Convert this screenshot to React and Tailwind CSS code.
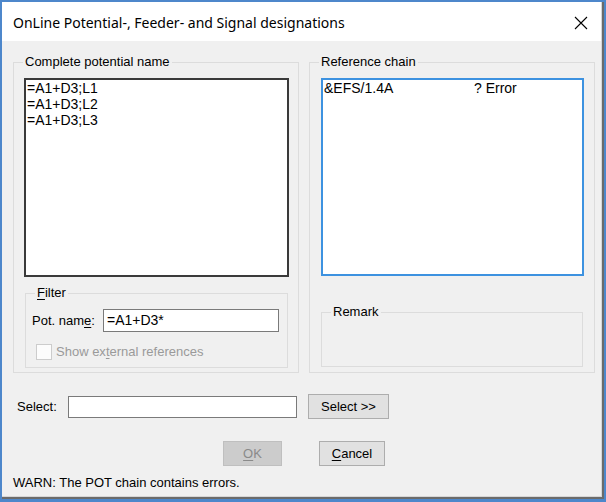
import React from "react";

const sans = { fontFamily: '"Liberation Sans", Arial, sans-serif' };

function Group({ label, className, children }) {
  return (
    <div className={"relative border border-[#dcdcdc] " + className}>
      <span className="absolute left-[9px] top-[-9px] bg-[#f0f0f0] px-[2px] text-[13px] leading-[16px] text-black">
        {label}
      </span>
      {children}
    </div>
  );
}

function Btn({ children, disabled, className }) {
  return (
    <div
      className={
        "flex h-[25px] items-center justify-center border text-[13px] leading-[16px] " +
        (disabled
          ? "border-[#bfbfbf] bg-[#cccccc] text-[#8a8a8a] "
          : "border-[#adadad] bg-[#e1e1e1] text-black ") +
        className
      }
    >
      {children}
    </div>
  );
}

export default function App() {
  return (
    <div
      className="flex h-[502px] w-[606px] flex-col bg-[#4d87cb] pb-[3px] pl-[2px] pr-[2px] pt-[2px]"
      style={sans}
    >
      <div className="flex flex-1 flex-col border-b-2 border-r-2 border-[#6b6b6b]">
        <div className="flex flex-1 flex-col border-b border-r border-[#d6d6d6] bg-[#f0f0f0]">
          {/* Title bar */}
          <div className="flex h-[39px] items-center justify-between bg-white pl-[11px] pr-[13px]">
            <span
              className="mt-[1px] text-[14px] text-black"
              style={{ fontFamily: '"Noto Sans", "Open Sans", sans-serif' }}
            >
              OnLine Potential-, Feeder- and Signal designations
            </span>
            <svg width="14" height="14" viewBox="0 0 14 14" className="mt-[2px]">
              <path d="M1 1 L13 13 M13 1 L1 13" stroke="#000" strokeWidth="1.1" fill="none" />
            </svg>
          </div>

          {/* Content */}
          <div className="flex flex-col pl-[11px] pt-[21px]">
            <div className="flex gap-[10px]">
              <Group label="Complete potential name" className="h-[311px] w-[286px] pl-[10px] pt-[15px]">
                <div className="h-[199px] w-[265px] border-2 border-[#3a3a3a] bg-white pl-[1px] pt-[0px] text-[14px] leading-[16px] text-black">
                  <div>=A1+D3;L1</div>
                  <div>=A1+D3;L2</div>
                  <div>=A1+D3;L3</div>
                </div>
                <Group
                  label={
                    <>
                      <u className="underline-offset-2">F</u>ilter
                    </>
                  }
                  className="ml-[1px] mt-[16px] h-[75px] w-[263px]"
                >
                  <div className="flex items-center pl-[6px] pt-[15px]">
                    <span className="w-[71px] text-[13px] leading-[16px] text-black">
                      Pot. nam<u className="underline-offset-2">e</u>:
                    </span>
                    <div className="flex h-[23px] w-[176px] items-center border border-[#7a7a7a] bg-white pl-[3px] text-[14px] text-black">
                      =A1+D3*
                    </div>
                  </div>
                  <div className="mt-[12px] flex items-center pl-[10px]">
                    <div className="h-[16px] w-[16px] border border-[#cccccc] bg-[#fcfcfc]" />
                    <span className="ml-[4px] text-[13px] leading-[16px] text-[#9a9a9a]">
                      Show ex<u className="underline-offset-2">t</u>ernal references
                    </span>
                  </div>
                </Group>
              </Group>

              <Group label="Reference chain" className="h-[311px] w-[286px] pl-[11px] pt-[15px]">
                <div className="h-[198px] w-[263px] border-2 border-[#3d92e0] bg-white pl-[1px] pt-[0px] text-[14px] leading-[16px] text-black">
                  <div className="flex">
                    <span className="w-[150px]">&amp;EFS/1.4A</span>
                    <span>? Error</span>
                  </div>
                </div>
                <Group label="Remark" className="mt-[36px] h-[55px] w-[262px]" />
              </Group>
            </div>

            {/* Select row */}
            <div className="mt-[21px] flex h-[25px] items-center pl-[4px]">
              <span className="w-[51px] text-[13px] leading-[16px] text-black">Select:</span>
              <div className="h-[22px] w-[229px] border border-[#7a7a7a] bg-white" />
              <Btn className="ml-[11px] w-[81px]">Select &gt;&gt;</Btn>
            </div>

            {/* Buttons */}
            <div className="mt-[22px] flex pl-[210px]">
              <Btn disabled className="w-[59px]">
                <u className="underline-offset-2">O</u>K
              </Btn>
              <Btn className="ml-[37px] w-[66px]">
                <u className="underline-offset-2">C</u>ancel
              </Btn>
            </div>

            <div className="mt-[9px] text-[13px] leading-[16px] text-black">
              WARN: The POT chain contains errors.
            </div>
          </div>
        </div>
      </div>
    </div>
  );
}
